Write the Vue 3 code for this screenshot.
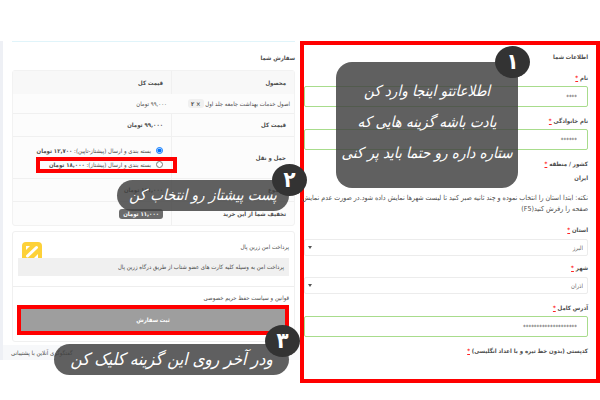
<script setup>
import { ref } from 'vue'

const firstName = ref('****')
const lastName = ref('******')
const state = ref('البرز')
const city = ref('اذران')
const address = ref('********************')
const shipping = ref('express-down')

const shippingOptions = [
  { id: 'express-down', label: 'بسته بندی و ارسال (پیشتاز-تاپین):', price: '۱۲,۷۰۰ تومان' },
  { id: 'express', label: 'بسته بندی و ارسال (پیشتاز):', price: '۱۸,۰۰۰ تومان', marked: true }
]
</script>

<template>
  <div class="checkout" dir="rtl">
    <section class="billing">
      <h2>اطلاعات شما</h2>

      <div class="field">
        <label for="first-name">نام <abbr>*</abbr></label>
        <input id="first-name" v-model="firstName" type="text" />
      </div>
      <div class="field">
        <label for="last-name">نام خانوادگی <abbr>*</abbr></label>
        <input id="last-name" v-model="lastName" type="text" />
      </div>
      <div class="field country">
        <span class="label">کشور / منطقه <abbr>*</abbr></span>
        <strong>ایران</strong>
      </div>

      <p class="note">
        نکته: ابتدا استان را انتخاب نموده و چند ثانیه صبر کنید تا لیست شهرها نمایش داده شود.در صورت عدم نمایش<br />
        صفحه را رفرش کنید(F5)
      </p>

      <div class="field picker">
        <label for="state">استان <abbr>*</abbr></label>
        <div class="select">
          <select id="state" v-model="state">
            <option>البرز</option>
          </select>
        </div>
      </div>
      <div class="field picker">
        <label for="city">شهر <abbr>*</abbr></label>
        <div class="select">
          <select id="city" v-model="city">
            <option>اذران</option>
          </select>
        </div>
      </div>
      <div class="field">
        <label for="address">آدرس کامل <abbr>*</abbr></label>
        <input id="address" v-model="address" type="text" />
      </div>
      <div class="field">
        <span class="label">کدپستی (بدون خط تیره و با اعداد انگلیسی) <abbr>*</abbr></span>
      </div>

      <div class="tip tip-form">
        <span>اطلاعاتتو اینجا وارد کن</span>
        <span>یادت باشه گزینه هایی که</span>
        <span>ستاره داره رو حتما باید پر کنی</span>
        <b class="step">۱</b>
      </div>
    </section>

    <section class="order">
      <div class="order-body">
        <h2>سفارش شما</h2>

        <table>
          <thead>
            <tr>
              <th>محصول</th>
              <th>قیمت کل</th>
            </tr>
          </thead>
          <tbody>
            <tr class="product">
              <td>اصول خدمات بهداشت جامعه جلد اول <span class="qty">× ۲</span></td>
              <td>۹۹,۰۰۰ تومان</td>
            </tr>
            <tr class="sum">
              <th>قیمت کل</th>
              <td>۹۹,۰۰۰ تومان</td>
            </tr>
            <tr class="shipping">
              <th>حمل و نقل</th>
              <td>
                <label
                  v-for="option in shippingOptions"
                  :key="option.id"
                  :class="{ marked: option.marked }"
                >
                  <input v-model="shipping" type="radio" name="shipping" :value="option.id" />
                  <span>{{ option.label }} <b>{{ option.price }}</b></span>
                </label>
              </td>
            </tr>
            <tr class="sum">
              <th>مجموع</th>
              <td>۱۱۱,۰۰۰ تومان</td>
            </tr>
            <tr class="sum">
              <th>تخفیف شما از این خرید</th>
              <td><span class="saving">۱۱,۰۰۰ تومان</span></td>
            </tr>
          </tbody>
        </table>

        <div class="payment">
          <div class="method">
            <span>پرداخت امن زرین پال</span>
            <svg width="20" height="16" viewBox="0 0 20 16">
              <path d="M4 0h12a4 4 0 0 1 4 4v12H0V4a4 4 0 0 1 4-4z" fill="#fdd139" />
              <path d="M4 4h4L4 8z" fill="#fff" />
              <path d="M14.500 5.500L5.500 14" stroke="#fff" stroke-width="3" stroke-linecap="round" />
              <path d="M16 12v4h-4z" fill="#fff" />
            </svg>
          </div>
          <p class="about">پرداخت امن به وسیله کلیه کارت های عضو شتاب از طریق درگاه زرین پال</p>
          <div class="place">
            <a href="#privacy">قوانین و سیاست حفظ حریم خصوصی</a>
            <button type="button">ثبت سفارش</button>
          </div>
        </div>

        <div class="tip tip-shipping">
          <span>پست پیشتاز رو انتخاب کن</span>
          <b class="step">۲</b>
        </div>
        <div class="tip tip-submit">
          <span>ودر آخر روی این گزینه کلیک کن</span>
          <b class="step">۳</b>
        </div>
      </div>
      <footer>گفتگوگری آنلاین با پشتیبانی</footer>
    </section>
  </div>
</template>

<style>
body {
  background: #fff;
}
</style>

<style scoped>
* {
  box-sizing: border-box;
}

.checkout {
  display: grid;
  grid-template-columns: minmax(0, 1fr) minmax(0, 1fr);
  align-items: start;
  padding-top: 41px;
  font: 6px/14px "DejaVu Sans Condensed", "DejaVu Sans", sans-serif;
  color: #4c4c4c;
}

h2 {
  margin: 0;
  font-size: 6px;
  line-height: 14px;
  font-weight: bold;
}

.billing {
  position: relative;
  padding: 5px 8px 20px 0;
  border: 4px solid #f00;
}

.field {
  display: flex;
  flex-direction: column;
  margin-top: 7px;
}

.field label,
.label {
  font-weight: bold;
  line-height: 14px;
  margin-bottom: 1px;
}

abbr {
  color: #f22;
  text-decoration: underline;
}

.field input {
  height: 21px;
  width: 100%;
  padding: 0 10px;
  border: 1px solid #a8dc8c;
  border-radius: 2px;
  background: #fff;
  font: inherit;
  color: #444;
}

.country .label {
  margin: 0;
}

.note {
  margin: 8px 0 0;
  font-size: 7px;
  line-height: 11px;
  white-space: nowrap;
}

.picker {
  margin-top: 5px;
}

.note + .picker {
  margin-top: 8px;
}

.picker label {
  margin-bottom: 2px;
}

.select {
  display: flex;
  position: relative;
}

.select::after {
  content: '';
  position: absolute;
  left: 4px;
  top: 7px;
  border: 2px solid transparent;
  border-top: 3px solid #555;
}

select {
  appearance: none;
  width: 100%;
  height: 17px;
  padding: 0 4px;
  border: 1px solid #ececec;
  border-radius: 2px;
  background: #fff;
  font: inherit;
  color: #666;
}

.order {
  border-left: 3px solid #eef0f5;
}

.order-body {
  position: relative;
  margin: 0 5px 3px 9px;
  padding-top: 9px;
  border-top: 1px solid #e0f4fa;
}

table {
  width: 100%;
  margin-top: 5px;
  table-layout: fixed;
  border-spacing: 0;
  border: 1px solid #f2f2f2;
  border-radius: 3px;
  background: #fcfcfc;
}

th,
td {
  height: 23px;
  padding: 0 8px;
  border-bottom: 1px solid #f0f0f0;
  text-align: right;
  font-weight: bold;
  line-height: 12px;
}

th:first-child {
  width: 123px;
  border-left: 1px solid #f0f0f0;
}

thead th {
  background: #f8f8f8;
  border-bottom: 0;
}

.product td {
  height: 20px;
  padding: 0 4px;
  font-weight: normal;
  white-space: nowrap;
}

.qty {
  padding: 1px 3px;
  border-radius: 3px;
  background: #f0f0f0;
  font-weight: bold;
}

tbody tr:last-child > * {
  border-bottom: 0;
}

.shipping th,
.shipping td {
  height: 42px;
}

.shipping label {
  display: flex;
  align-items: center;
  position: relative;
  height: 14px;
  gap: 5px;
  white-space: nowrap;
  font-weight: normal;
}

.shipping input {
  width: 7px;
  height: 7px;
  margin: 0;
}

.marked::after {
  content: '';
  position: absolute;
  inset: -1px -14px -1px 15px;
  border: 4px solid #f00;
}

.saving {
  display: inline-block;
  padding: 0 4px;
  border-radius: 3px;
  background: #6c6c6c;
  color: #fff;
  line-height: 10px;
}

.payment {
  margin-top: 5px;
  border: 1px solid #f0f0f0;
  border-radius: 3px;
}

.method {
  display: flex;
  justify-content: space-between;
  align-items: flex-end;
  padding: 4px 5px 0 9px;
  line-height: 22px;
}

.about {
  margin: 0 5px 10px;
  padding: 0 5px;
  background: #f0f0f0;
  line-height: 18px;
}

.place {
  display: flex;
  flex-direction: column;
  padding: 4px 5px 6px 4px;
  border-top: 1px solid #eee;
}

.place a {
  color: inherit;
  text-decoration: none;
}

button {
  height: 30px;
  border: 4px solid #f00;
  background: #9e9e9e;
  color: #fff;
  font: inherit;
  font-weight: bold;
}

footer {
  padding: 0 8px;
  background: #f7f8fa;
  line-height: 15px;
  text-align: left;
}

.tip {
  position: absolute;
  display: flex;
  flex-direction: column;
  align-items: center;
  border-radius: 16px;
  background: rgba(66, 66, 66, 0.84);
  color: #fff;
  font-size: 15px;
  font-style: italic;
  line-height: 31px;
  white-space: nowrap;
}

.tip-form {
  top: 17px;
  right: 78px;
  width: 182px;
  padding: 14px 0 19px;
}

.tip-shipping {
  top: 138px;
  right: 6px;
  width: 172px;
}

.tip-submit {
  top: 302px;
  right: 6px;
  width: 235px;
  font-size: 17px;
}

.step {
  position: absolute;
  top: -16px;
  right: -18px;
  width: 35px;
  height: 32px;
  border-radius: 50%;
  background: #333;
  font-size: 22px;
  font-style: normal;
  line-height: 32px;
  text-align: center;
}

.tip-submit .step {
  right: -11px;
  top: -19px;
}

.tip-form .step {
  right: -12px;
}
</style>
